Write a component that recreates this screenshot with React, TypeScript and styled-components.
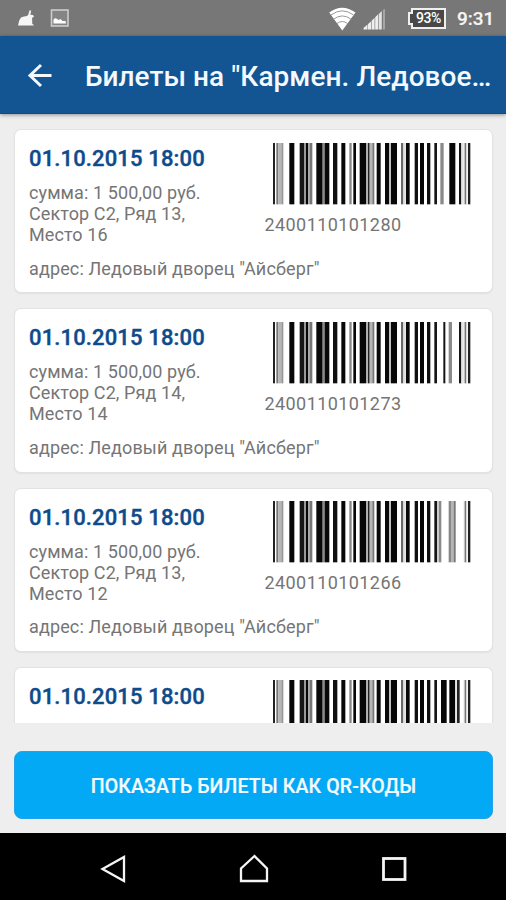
import React from 'react';
import styled, { createGlobalStyle } from 'styled-components';

const GlobalStyle = createGlobalStyle`
  *, *::before, *::after { box-sizing: border-box; }
  body { margin: 0; background: #eeeeee; font-family: Roboto, "Noto Sans", sans-serif; }
`;

const Screen = styled.div`
  width: 506px;
  height: 900px;
  display: flex;
  flex-direction: column;
  overflow: hidden;
  background: #eeeeee;
`;

const StatusBar = styled.header`
  flex: none;
  height: 36px;
  display: flex;
  align-items: center;
  justify-content: space-between;
  background: #777777;
`;

const StatusIcons = styled.svg`
  display: block;
  flex: none;
`;

const StatusGroup = styled.div`
  display: flex;
  align-items: center;
  height: 36px;
`;

const Battery = styled.div`
  position: relative;
  width: 35px;
  height: 21px;
  margin: 0 11px 0 23px;
  border: 2px solid #efefef;
  background: #484848;
  color: #ffffff;
  font-size: 14px;
  font-weight: 500;
  line-height: 17px;
  text-align: center;
  letter-spacing: -0.4px;

  &::before {
    content: '';
    position: absolute;
    left: -5px;
    top: 2px;
    width: 5px;
    height: 13px;
    border: 2px solid #efefef;
    border-right: 0;
    background: #484848;
  }
`;

const Clock = styled.time`
  width: 49px;
  margin-top: 2px;
  color: #f5f5f5;
  font-size: 19px;
  font-weight: 500;
  line-height: 24px;
  white-space: nowrap;
  -webkit-text-stroke: 0.2px #f5f5f5;
`;

const AppBar = styled.nav`
  flex: none;
  height: 78px;
  display: flex;
  align-items: center;
  background: #135592;
  border-bottom: 1px solid #104b82;
  box-shadow: 0 1px 4px rgba(0, 0, 0, 0.4);
  z-index: 1;
`;

const BackButton = styled.button`
  width: 85px;
  height: 78px;
  padding: 0;
  border: 0;
  background: none;
`;

const Title = styled.h1`
  margin: 5px 0 0;
  color: #f4f9ff;
  font-size: 28px;
  font-weight: 500;
  line-height: 32px;
  white-space: nowrap;
  letter-spacing: 0.06px;
`;

const TicketList = styled.main`
  flex: none;
  height: 609px;
  padding: 15px 14px 0;
  overflow: hidden;
`;

const TicketCard = styled.article`
  width: 478.5px;
  height: 164.3px;
  margin-bottom: 15px;
  padding: 12.6px 21px 0 14px;
  display: grid;
  grid-template-columns: 235.5px 1fr;
  grid-template-rows: 114px 26px;
  border: 1px solid #e2e2e2;
  border-radius: 7px;
  background: #ffffff;
  box-shadow: 0 1px 1px #e0e0e0;
`;

const TicketDate = styled.h2`
  margin: 3.6px 0 10px;
  color: #0e4b8b;
  font-size: 22px;
  font-weight: 500;
  line-height: 26px;
  letter-spacing: 0.14px;
  -webkit-text-stroke: 0.4px #0e4b8b;
`;

const Details = styled.p`
  margin: 0;
  color: #757575;
  font-size: 18px;
  line-height: 21px;
  letter-spacing: 0.1px;
`;

const Address = styled(Details)`
  grid-column: 1 / -1;
  padding-top: 1px;
  letter-spacing: 0.13px;
`;

const CodeNumber = styled(Details)`
  margin-top: 9px;
  letter-spacing: 0.42px;
`;

const BarcodeImage = styled.svg`
  display: block;
  width: 200px;
  height: 62px;
  margin-left: 8px;
`;

const ActionArea = styled.footer`
  flex: none;
  height: 110px;
  padding: 28px 14px 0;
`;

const ShowButton = styled.button`
  display: block;
  width: 479px;
  height: 68px;
  padding: 2px 0 0;
  border: 1px solid #23a1ea;
  border-radius: 8px;
  background: #04a9f5;
  color: #f4fcff;
  font-family: inherit;
  font-size: 19.5px;
  font-weight: 500;
  letter-spacing: 0.12px;
  -webkit-text-stroke: 0.2px #f4fcff;
`;

const NavBar = styled.div`
  flex: none;
  height: 67px;
  background: #000000;
`;

type Bar = [x: number, width: number, color: string];

const K = '#080808';
const G = '#777777';
const L = '#b5b5b5';

/* Bar positions are measured in thirds of a pixel from the symbol's left edge. */
const commonBars: Bar[] = [
  [0, 6, '#222222'], [10, 6, G], [16, 9, L], [25, 6, '#969696'],
  [49, 15, K], [80, 13, '#171717'], [93, 6, '#999999'], [99, 7, K], [109, 9, G],
  [130, 19, K], [149, 6, '#888888'], [155, 14, K], [180, 13, '#101010'], [205, 12, K],
  [229, 7, '#8a8a8a'], [241, 8, K], [260, 20, K], [284, 6, '#222222'], [290, 8, L],
  [298, 6, G], [311, 12, K], [336, 12, K], [348, 6, '#c0c0c0'], [354, 18, K],
  [384, 7, '#686868'], [391, 7, '#dddddd'], [399, 11, K], [425, 10, '#111111'],
  [441, 12, K], [462, 10, '#111111'], [484, 8, '#161616'],
  [572, 3, '#dddddd'], [575, 5, G], [580, 3, '#dddddd'], [585, 7, '#202020'],
];

interface Ticket {
  code: string;
  place?: { row: number; seat: number };
  bars: Bar[];
}

const tickets: Ticket[] = [
  { code: '2400110101280', place: { row: 13, seat: 16 }, bars: [[502, 10, '#8a8a8a'], [529, 18, K], [558, 7, '#151515'], [565, 7, '#e5e5e5']] },
  { code: '2400110101273', place: { row: 14, seat: 14 }, bars: [[511, 6, '#151515'], [527, 10, '#8a8a8a'], [558, 7, '#151515'], [565, 7, '#e5e5e5']] },
  { code: '2400110101266', place: { row: 13, seat: 12 }, bars: [[492, 6, '#cccccc'], [498, 7, '#8a8a8a'], [527, 7, '#888888'], [534, 8, L], [542, 6, G]] },
  { code: 'next', bars: [[504, 17, K], [529, 17, K], [546, 5, '#dddddd'], [552, 8, '#252525']] },
];

function Barcode({ bars }: { bars: Bar[] }) {
  return (
    <BarcodeImage viewBox="0 0 600 186" preserveAspectRatio="none" aria-hidden="true">
      {[...commonBars, ...bars].map(([x, width, color]) => (
        <rect key={x} x={x} y="0" width={width} height="184" fill={color} />
      ))}
    </BarcodeImage>
  );
}

function TicketItem({ code, place, bars }: Ticket) {
  return (
    <TicketCard>
      <div>
        <TicketDate>01.10.2015 18:00</TicketDate>
        {place && (
          <Details>
            сумма: 1 500,00 руб.<br />
            Сектор C2, Ряд {place.row},<br />
            Место {place.seat}
          </Details>
        )}
      </div>
      <div>
        <Barcode bars={bars} />
        {place && <CodeNumber>{code}</CodeNumber>}
      </div>
      {place && <Address>адрес: Ледовый дворец "Айсберг"</Address>}
    </TicketCard>
  );
}

export default function App() {
  return (
    <>
      <GlobalStyle />
      <Screen>
        <StatusBar>
          <StatusIcons width="80" height="36">
            <path d="M18 25.5l1.2-5 1.8-3 3-1 3.2-.5 1.2-1.7 1.2-4 1.6.5-.9 4 2.8.3.8 2-1.8.6.2 6.4 1.4.6v.8z" fill="#f5f5f5" />
            <rect x="51.5" y="10" width="16.5" height="16" fill="#858585" stroke="#cccccc" strokeWidth="1.6" />
            <path d="M53.5 23.5v-4l2-1.5 3 2 2-1 2 2h3l.5 2.5z" fill="#ffffff" />
          </StatusIcons>
          <StatusGroup>
            <StatusIcons width="61" height="36">
              <path d="M2.2 12.5Q15 3 28.5 12.5L15.3 30.5z" fill="#ffffff" />
              <path d="M4 15q11.3-8.3 22.6 0M6.5 19.2q8.8-6.5 17.6 0M10 23.5q5.3-4 10.6 0" fill="none" stroke="#999999" strokeWidth="1" />
              <path d="M36.5 29.5V28l4-3.5v5zM41 29.5h3v-8.1L41 24zM44.6 29.5h3V17.8l-3 3zM48.2 29.5h3V14.3l-3 3z" fill="#eeeeee" />
              <path d="M51.8 29.5h3V11.1l-3 2.8z" fill="#e2e2e2" />
              <path d="M56 29.5V9.7l2-1v20.8z" fill="#a5a5a5" />
            </StatusIcons>
            <Battery>93%</Battery>
            <Clock>9:31</Clock>
          </StatusGroup>
        </StatusBar>
        <AppBar>
          <BackButton aria-label="Назад">
            <StatusIcons width="85" height="78">
              <path d="M51.5 39.5H30M41 29L30 39.5 41 50" fill="none" stroke="#f3f8ff" strokeWidth="3" />
            </StatusIcons>
          </BackButton>
          <Title>Билеты на "Кармен. Ледовое…</Title>
        </AppBar>
        <TicketList>
          {tickets.map((ticket) => (
            <TicketItem key={ticket.code} {...ticket} />
          ))}
        </TicketList>
        <ActionArea>
          <ShowButton>ПОКАЗАТЬ БИЛЕТЫ КАК QR-КОДЫ</ShowButton>
        </ActionArea>
        <NavBar>
          <StatusIcons width="506" height="67" fill="none" stroke="#f5f5f5" strokeWidth="2.3">
            <path d="M102.5 36l21.5-12v24z" />
            <path d="M241 48V35.5L254.5 23 267 35.5V48z" />
            <rect x="383.5" y="25.5" width="21.5" height="21" strokeWidth="2.8" />
          </StatusIcons>
        </NavBar>
      </Screen>
    </>
  );
}
